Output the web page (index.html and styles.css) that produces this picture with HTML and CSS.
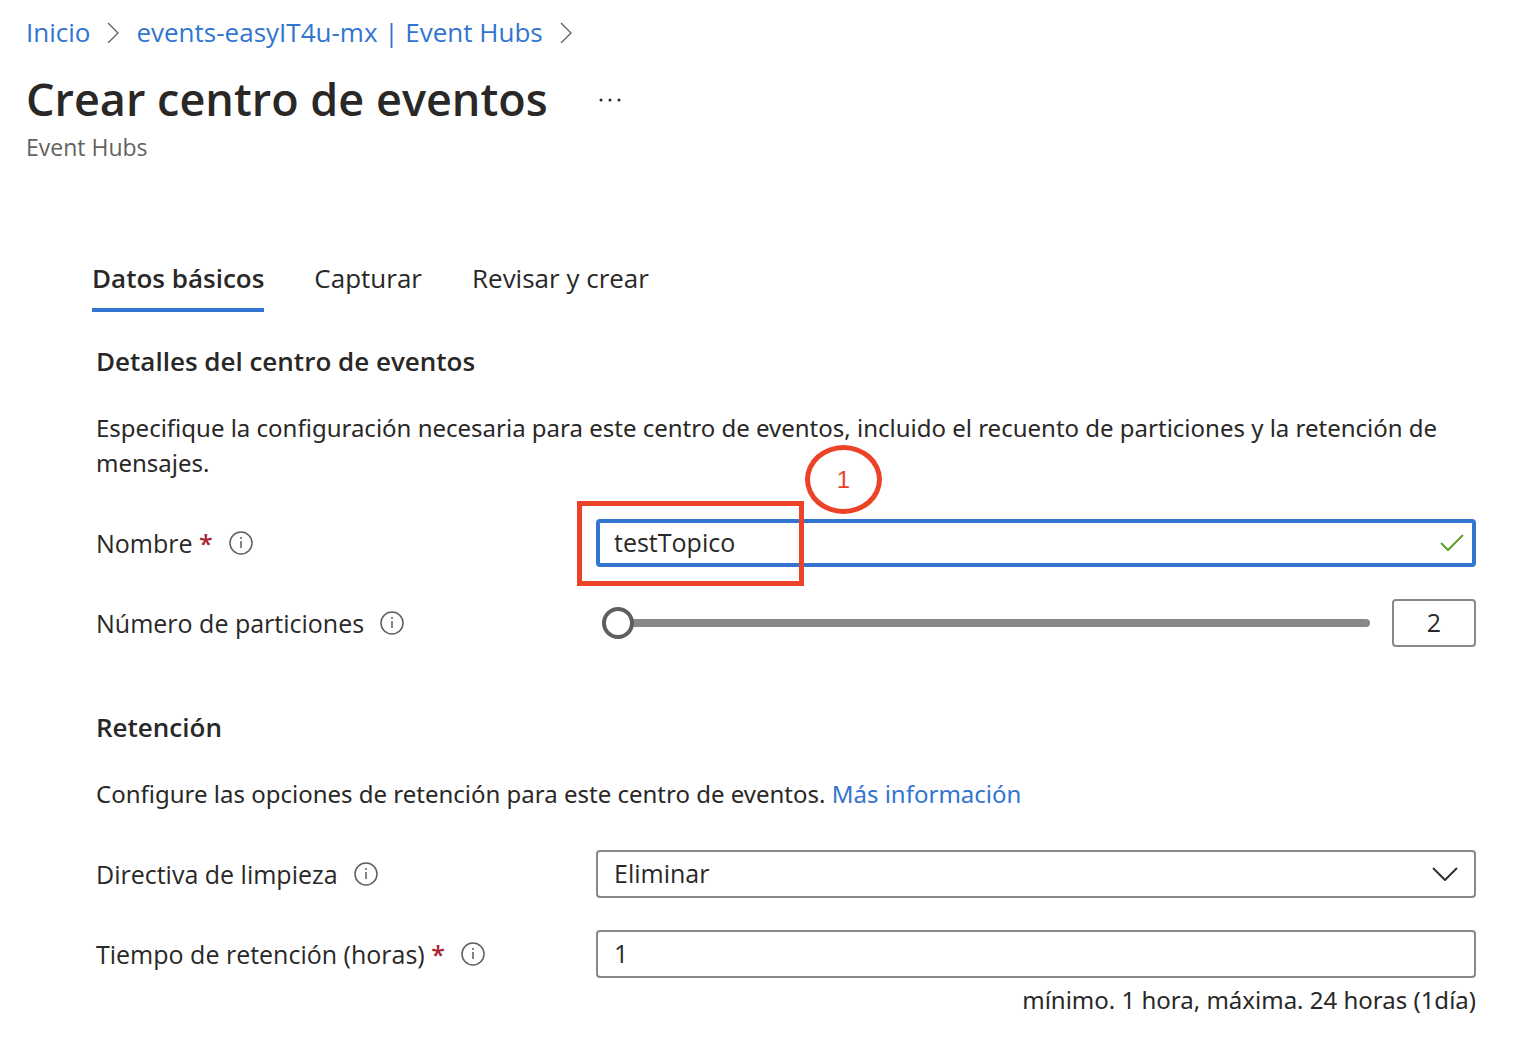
FILE: index.html
```html
<!DOCTYPE html>
<html lang="es">
<head>
<meta charset="utf-8">
<meta name="viewport" content="width=device-width, initial-scale=1">
<title>Crear centro de eventos</title>
<link rel="stylesheet" href="styles.css">
</head>
<body>
<header class="page-header">
  <nav class="breadcrumb" aria-label="Ruta">
    <a href="#">Inicio</a>
    <svg class="crumb-arrow" viewBox="0 0 12 22" aria-hidden="true"><path d="M1 2 L11 12 L1 22"/></svg>
    <a href="#">events-easyIT4u-mx | Event Hubs</a>
    <svg class="crumb-arrow" viewBox="0 0 12 22" aria-hidden="true"><path d="M1 2 L11 12 L1 22"/></svg>
  </nav>
  <div class="title-row">
    <h1>Crear centro de eventos</h1>
    <button class="more" type="button" aria-label="Más acciones">
      <svg viewBox="0 0 24 4" aria-hidden="true"><circle cx="3" cy="2" r="1.5"/><circle cx="12" cy="2" r="1.5"/><circle cx="21" cy="2" r="1.5"/></svg>
    </button>
  </div>
  <p class="subtitle">Event Hubs</p>
</header>

<main class="content">
  <nav class="tabs">
    <button class="tab tab-active" type="button">Datos básicos</button>
    <button class="tab" type="button">Capturar</button>
    <button class="tab" type="button">Revisar y crear</button>
  </nav>

  <form class="form">
    <section class="section">
      <h2>Detalles del centro de eventos</h2>
      <p class="text">Especifique la configuración necesaria para este centro de eventos, incluido el recuento de particiones y la retención de mensajes.</p>
      <div class="rows">
        <div class="row">
          <div class="label-cell">
            <label for="name">Nombre <span class="required">*</span></label>
            <svg class="info" viewBox="0 0 24 24" aria-hidden="true"><circle cx="12" cy="12" r="11"/><path d="M12 10v7M12 6v2"/></svg>
          </div>
          <div class="field">
            <input class="box box-focus" id="name" type="text" value="testTopico">
            <svg class="check" viewBox="0 0 24 18" aria-hidden="true"><path d="M1 9 L8 16 L23 1"/></svg>
            <span class="mark-box"></span>
            <span class="mark-step">1</span>
          </div>
        </div>
        <div class="row">
          <div class="label-cell">
            <label for="partitions">Número de particiones</label>
            <svg class="info" viewBox="0 0 24 24" aria-hidden="true"><circle cx="12" cy="12" r="11"/><path d="M12 10v7M12 6v2"/></svg>
          </div>
          <div class="field slider-field">
            <input class="slider" id="partitions" type="range" min="2" max="32" value="2">
            <input class="box box-count" type="text" value="2" aria-label="Número de particiones">
          </div>
        </div>
      </div>
    </section>

    <section class="section">
      <h2>Retención</h2>
      <p class="text">Configure las opciones de retención para este centro de eventos. <a href="#">Más información</a></p>
      <div class="rows">
        <div class="row">
          <div class="label-cell">
            <label for="cleanup">Directiva de limpieza</label>
            <svg class="info" viewBox="0 0 24 24" aria-hidden="true"><circle cx="12" cy="12" r="11"/><path d="M12 10v7M12 6v2"/></svg>
          </div>
          <div class="field">
            <select class="box" id="cleanup"><option>Eliminar</option></select>
            <svg class="chevron" viewBox="0 0 26 14" aria-hidden="true"><path d="M1 1 L13 13 L25 1"/></svg>
          </div>
        </div>
        <div class="row">
          <div class="label-cell">
            <label for="hours">Tiempo de retención (horas) <span class="required">*</span></label>
            <svg class="info" viewBox="0 0 24 24" aria-hidden="true"><circle cx="12" cy="12" r="11"/><path d="M12 10v7M12 6v2"/></svg>
          </div>
          <div class="field">
            <input class="box" id="hours" type="text" value="1">
          </div>
        </div>
      </div>
      <p class="hint">mínimo. 1 hora, máxima. 24 horas (1día)</p>
    </section>
  </form>
</main>
</body>
</html>
```
FILE: styles.css
```css
* {
  box-sizing: border-box;
}

body {
  margin: 0;
  background: #fff;
  color: #292827;
  font-family: "Open Sans", "Noto Sans", sans-serif;
  font-size: 25px;
  line-height: 35px;
}

h1, h2, p {
  margin: 0;
}

a {
  color: #3275d0;
  text-decoration: none;
}

button, input, select {
  font: inherit;
  color: inherit;
}

.page-header {
  padding: 14px 26px 0;
}

.breadcrumb {
  display: flex;
  align-items: center;
  gap: 17px;
  font-size: 26px;
  line-height: 36px;
}

.crumb-arrow {
  width: 12px;
  height: 22px;
  fill: none;
  stroke: #605e5c;
  stroke-width: 1.3;
}

.title-row {
  display: flex;
  align-items: center;
  gap: 50px;
  margin-top: 16px;
}

h1 {
  padding-bottom: 2px;
  font-size: 45px;
  font-weight: 600;
  line-height: 66px;
}

.more {
  display: flex;
  padding: 0;
  border: 0;
  background: none;
}

.more svg {
  width: 24px;
  height: 4px;
  fill: #292827;
}

.subtitle {
  color: #646260;
  font-size: 23px;
  line-height: 26px;
}

.content {
  padding: 92px 56px 28px 92px;
}

.tabs {
  display: flex;
  gap: 50px;
}

.tab {
  padding: 8px 0 12px;
  border: 0;
  border-bottom: 4px solid transparent;
  background: none;
  font-size: 26px;
  line-height: 36px;
}

.tab-active {
  border-color: #3275d0;
  font-weight: 600;
}

.form {
  padding-left: 4px;
}

.section {
  padding-top: 32px;
}

.section + .section {
  padding-top: 63px;
}

h2 {
  font-size: 26px;
  font-weight: 600;
  line-height: 34px;
}

.text, .hint {
  font-family: "Noto Sans", "Open Sans", sans-serif;
  font-size: 24px;
}

.text {
  margin-top: 32px;
}

.rows {
  display: grid;
  gap: 32px;
  margin-top: 39px;
}

.row {
  display: grid;
  grid-template-columns: 500px 1fr;
  align-items: center;
}

.label-cell {
  display: flex;
  align-items: center;
  gap: 16px;
}

.required {
  color: #a4262c;
  font-weight: 600;
}

.info {
  width: 24px;
  height: 24px;
  fill: none;
  stroke: #605e5c;
  stroke-width: 1.5;
}

.field {
  display: flex;
  align-items: center;
  position: relative;
}

.box {
  width: 100%;
  height: 48px;
  padding: 0 16px 2px;
  border: 2px solid #8a8886;
  border-radius: 4px;
  outline: 0;
  background: #fff;
  appearance: none;
}

.box-focus {
  padding: 0 14px 2px;
  border: 4px solid #3275d0;
}

.check, .chevron {
  position: absolute;
  fill: none;
  pointer-events: none;
}

.check {
  right: 12px;
  width: 24px;
  height: 18px;
  stroke: #5f9e2c;
  stroke-width: 2;
}

.chevron {
  right: 18px;
  width: 26px;
  height: 14px;
  stroke: #323130;
  stroke-width: 2;
}

.mark-box {
  position: absolute;
  top: -18px;
  left: -19px;
  width: 227px;
  height: 85px;
  border: 5px solid #ec4228;
  pointer-events: none;
}

.mark-step {
  display: flex;
  align-items: center;
  justify-content: center;
  position: absolute;
  top: -74px;
  left: 209px;
  width: 77px;
  height: 69px;
  border: 5px solid #ec4228;
  border-radius: 50%;
  color: #ec4228;
  font-family: "Liberation Sans", Arial, sans-serif;
  font-size: 24px;
  line-height: 28px;
}

.slider-field {
  gap: 22px;
  padding-left: 6px;
}

.slider {
  flex: 1;
  min-width: 0;
  height: 32px;
  margin: 0;
  background: none;
  appearance: none;
}

.slider::-webkit-slider-runnable-track {
  height: 8px;
  border-radius: 4px;
  background: #8a8886;
}

.slider::-webkit-slider-thumb {
  width: 32px;
  height: 32px;
  margin-top: -12px;
  border: 4px solid #605e5c;
  border-radius: 50%;
  background: #fff;
  appearance: none;
}

.box-count {
  width: 84px;
  text-align: center;
}

.hint {
  margin-top: 4px;
  text-align: right;
}
```
